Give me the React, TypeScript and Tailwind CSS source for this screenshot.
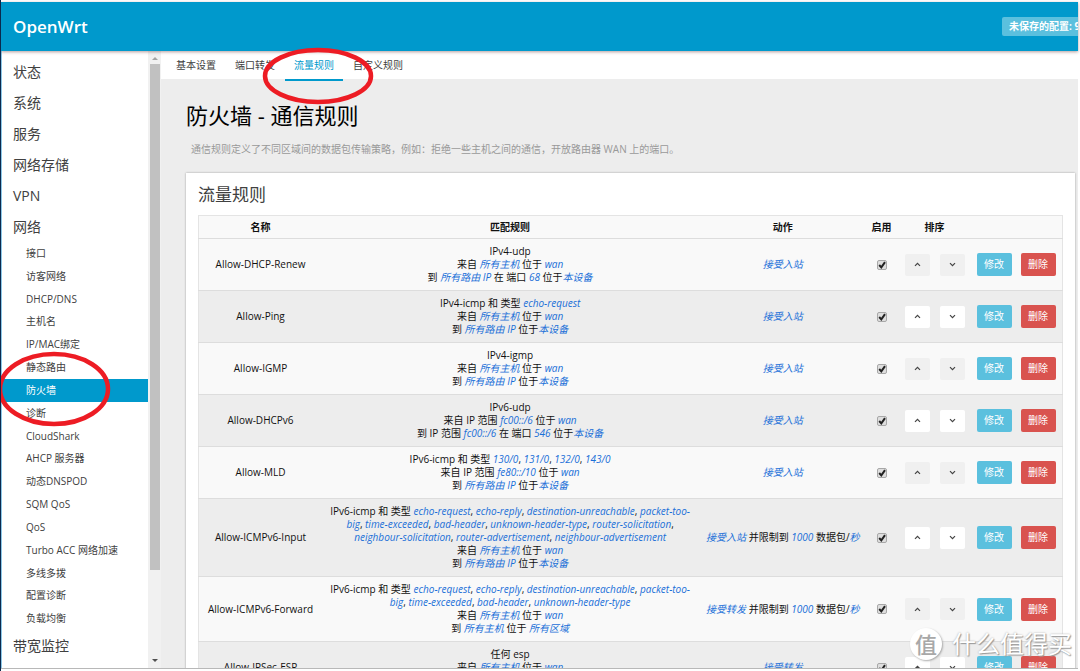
import { Fragment, type ReactNode } from "react";
import clsx from "clsx";

type Rule = {
  name: string;
  match: ReactNode[];
  action: ReactNode;
};

const Em = ({ children }: { children: ReactNode }) => (
  <em className="text-[#1a6fd8]">{children}</em>
);

// Comma separated list of ICMP types
const Types = ({ items }: { items: string[] }) => (
  <>
    {items.map((item, i) => (
      <Fragment key={item}>
        {i > 0 && ", "}
        <Em>{item}</Em>
      </Fragment>
    ))}
  </>
);

const fromAnyHost = (
  <>
    来自 <Em>所有主机</Em> 位于 <Em>wan</Em>
  </>
);

const toAnyRouterIp = (
  <>
    到 <Em>所有路由 IP</Em> 位于<Em>本设备</Em>
  </>
);

const toAnyZone = (
  <>
    到 <Em>所有主机</Em> 位于 <Em>所有区域</Em>
  </>
);

const rules: Rule[] = [
  {
    name: "Allow-DHCP-Renew",
    match: [
      "IPv4-udp",
      fromAnyHost,
      <>
        到 <Em>所有路由 IP</Em> 在 端口 <Em>68</Em> 位于<Em>本设备</Em>
      </>,
    ],
    action: <Em>接受入站</Em>,
  },
  {
    name: "Allow-Ping",
    match: [
      <>
        IPv4-icmp 和 类型 <Em>echo-request</Em>
      </>,
      fromAnyHost,
      toAnyRouterIp,
    ],
    action: <Em>接受入站</Em>,
  },
  {
    name: "Allow-IGMP",
    match: ["IPv4-igmp", fromAnyHost, toAnyRouterIp],
    action: <Em>接受入站</Em>,
  },
  {
    name: "Allow-DHCPv6",
    match: [
      "IPv6-udp",
      <>
        来自 IP 范围 <Em>fc00::/6</Em> 位于 <Em>wan</Em>
      </>,
      <>
        到 IP 范围 <Em>fc00::/6</Em> 在 端口 <Em>546</Em> 位于<Em>本设备</Em>
      </>,
    ],
    action: <Em>接受入站</Em>,
  },
  {
    name: "Allow-MLD",
    match: [
      <>
        IPv6-icmp 和 类型 <Types items={["130/0", "131/0", "132/0", "143/0"]} />
      </>,
      <>
        来自 IP 范围 <Em>fe80::/10</Em> 位于 <Em>wan</Em>
      </>,
      toAnyRouterIp,
    ],
    action: <Em>接受入站</Em>,
  },
  {
    name: "Allow-ICMPv6-Input",
    match: [
      <>
        IPv6-icmp 和 类型{" "}
        <Types
          items={[
            "echo-request",
            "echo-reply",
            "destination-unreachable",
            "packet-too-big",
            "time-exceeded",
            "bad-header",
            "unknown-header-type",
            "router-solicitation",
            "neighbour-solicitation",
            "router-advertisement",
            "neighbour-advertisement",
          ]}
        />
      </>,
      fromAnyHost,
      toAnyRouterIp,
    ],
    action: (
      <>
        <Em>接受入站</Em> 并限制到 <Em>1000</Em> 数据包/<Em>秒</Em>
      </>
    ),
  },
  {
    name: "Allow-ICMPv6-Forward",
    match: [
      <>
        IPv6-icmp 和 类型{" "}
        <Types
          items={[
            "echo-request",
            "echo-reply",
            "destination-unreachable",
            "packet-too-big",
            "time-exceeded",
            "bad-header",
            "unknown-header-type",
          ]}
        />
      </>,
      fromAnyHost,
      toAnyZone,
    ],
    action: (
      <>
        <Em>接受转发</Em> 并限制到 <Em>1000</Em> 数据包/<Em>秒</Em>
      </>
    ),
  },
  {
    name: "Allow-IPSec-ESP",
    match: ["任何 esp", fromAnyHost, toAnyZone],
    action: <Em>接受转发</Em>,
  },
];

const topMenu = ["状态", "系统", "服务", "网络存储", "VPN", "网络"];

const networkMenu = [
  "接口",
  "访客网络",
  "DHCP/DNS",
  "主机名",
  "IP/MAC绑定",
  "静态路由",
  "防火墙",
  "诊断",
  "CloudShark",
  "AHCP 服务器",
  "动态DNSPOD",
  "SQM QoS",
  "QoS",
  "Turbo ACC 网络加速",
  "多线多拨",
  "配置诊断",
  "负载均衡",
];

const tabs = ["基本设置", "端口转发", "流量规则", "自定义规则"];

const MenuLink = ({ label }: { label: string }) => (
  <a href="#" className="flex h-[31px] items-center pl-[11px] text-sm text-[#404040]">
    {label}
  </a>
);

const Sidebar = () => (
  <nav className="w-[146px] shrink-0 overflow-hidden bg-white pt-[5px]">
    {topMenu.map((label) => (
      <MenuLink key={label} label={label} />
    ))}
    <ul className="flex h-[388px] flex-col">
      {networkMenu.map((label) => (
        <li key={label} className="flex-1">
          <a
            href="#"
            className={clsx(
              "flex h-full items-center pl-6 text-[10px] whitespace-nowrap",
              label === "防火墙" ? "bg-[#0099cc] text-white" : "text-[#404040]"
            )}
          >
            {label}
          </a>
        </li>
      ))}
    </ul>
    <MenuLink label="带宽监控" />
  </nav>
);

const Scrollbar = () => (
  <div className="flex w-[13px] shrink-0 flex-col items-center bg-[#f1f1f1]">
    <div className="flex h-[13px] items-center">
      <svg width="6" height="4" viewBox="0 0 6 4">
        <path d="M0 4L3 1L6 4Z" fill="#a3a3a3" />
      </svg>
    </div>
    <div className="w-[10px] grow-[506] bg-[#c1c1c1]" />
    <div className="grow-[84]" />
    <div className="flex h-[14px] items-center">
      <svg width="6" height="4" viewBox="0 0 6 4">
        <path d="M0 0L3 3L6 0Z" fill="#505050" />
      </svg>
    </div>
  </div>
);

const SortButton = ({ dir, odd }: { dir: "up" | "down"; odd: boolean }) => (
  <button
    aria-label={dir === "up" ? "上移" : "下移"}
    className={clsx(
      "flex h-[22px] w-[25px] items-center justify-center rounded-[2px]",
      odd ? "bg-[#f0f0f0]" : "bg-white"
    )}
  >
    <svg width="7" height="5" viewBox="0 0 7 5" fill="none" stroke="#444" strokeWidth="1.2">
      <path d={dir === "up" ? "M1 3.8L3.5 1.3L6 3.8" : "M1 1.2L3.5 3.7L6 1.2"} />
    </svg>
  </button>
);

const RuleRow = ({ rule, odd }: { rule: Rule; odd: boolean }) => (
  <tr className={clsx("border-b border-[#ddd]", odd ? "bg-[#f9f9f9]" : "bg-[#ededed]")}>
    <td className="whitespace-nowrap">{rule.name}</td>
    <td className="px-1 py-[6px] leading-[13px]">
      {rule.match.map((line, i) => (
        <div key={i}>{line}</div>
      ))}
    </td>
    <td className="whitespace-nowrap">{rule.action}</td>
    <td>
      <label className="relative mx-auto block size-[10px]">
        <input
          type="checkbox"
          defaultChecked
          aria-label={`启用 ${rule.name}`}
          className="peer block size-[10px] appearance-none rounded-[2px] border border-[#a8a8a8] bg-[#dedede]"
        />
        <svg
          viewBox="0 0 10 10"
          className="pointer-events-none absolute inset-0 hidden size-[10px] peer-checked:block"
        >
          <path d="M2.2 5L4.3 7.3L8 2.2" fill="none" stroke="#222" strokeWidth="2" />
        </svg>
      </label>
    </td>
    <td>
      <div className="flex justify-center gap-[10px]">
        <SortButton dir="up" odd={odd} />
        <SortButton dir="down" odd={odd} />
      </div>
    </td>
    <td>
      <div className="flex gap-[9px] pl-[3px]">
        <button className="h-[23px] w-[35px] rounded-[2px] bg-[#5bc0de] text-white">
          修改
        </button>
        <button className="h-[23px] w-[35px] rounded-[2px] bg-[#d9534f] text-white">
          删除
        </button>
      </div>
    </td>
  </tr>
);

const RulesTable = () => (
  <table className="w-full table-fixed border border-[#e4e4e4] text-center text-[10px] text-[#111]">
    <colgroup>
      <col className="w-[14.3%]" />
      <col />
      <col className="w-[19.6%]" />
      <col className="w-[28px]" />
      <col className="w-[78px]" />
      <col className="w-[89px]" />
    </colgroup>
    <thead>
      <tr className="h-[23px] border-b border-[#ddd] bg-[#f9f9f9]">
        <th>名称</th>
        <th>匹配规则</th>
        <th>动作</th>
        <th className="whitespace-nowrap">启用</th>
        <th>排序</th>
        <th />
      </tr>
    </thead>
    <tbody>
      {rules.map((rule, i) => (
        <RuleRow key={rule.name} rule={rule} odd={i % 2 === 0} />
      ))}
    </tbody>
  </table>
);

const Watermark = () => (
  <div className="pointer-events-none absolute right-2 bottom-[11px] flex items-center gap-[10px]">
    <span className="flex size-8 items-center justify-center rounded-full bg-white text-[22px] font-medium text-[#a8a8a8] shadow-[1px_1px_2px_#aaa]">
      值
    </span>
    <span className="text-2xl leading-8 text-white [text-shadow:1px_1px_1px_#999,0_0_2px_#aaa]">
      什么值得买
    </span>
  </div>
);

const App = () => {
  return (
    <div className="relative flex h-screen flex-col overflow-hidden border-l border-[#0b2a4e] bg-white pt-[2px] pr-[2px] font-['Open_Sans','Noto_Sans_CJK_SC',sans-serif]">
      <header className="z-10 flex h-[49px] shrink-0 items-center justify-between overflow-hidden bg-[#0099cc] pl-3 text-white shadow-[0_1px_3px_rgba(90,40,40,0.45)]">
        <a href="#" className="text-[17px] font-semibold">
          OpenWrt
        </a>
        <div className="w-[76px] overflow-hidden">
          <a
            href="#"
            className="flex h-[19px] w-max items-center rounded-[2px] bg-[#5bc0de] px-[7px] text-[10px] font-bold whitespace-nowrap"
          >
            未保存的配置: 9
          </a>
        </div>
      </header>

      <div className="flex min-h-0 flex-1 border-l border-[#8cc8e8]">
        <Sidebar />
        <Scrollbar />
        <main className="min-w-0 flex-1 overflow-hidden bg-[#ededed]">
          {/* Tabs */}
          <div className="flex h-7 gap-px bg-white pl-[6px]">
            {tabs.map((tab) => (
              <a
                key={tab}
                href="#"
                className={clsx(
                  "flex h-[30px] items-center border-b-2 px-[9px] text-[10px]",
                  tab === "流量规则"
                    ? "border-[#0099cc] text-[#0099cc]"
                    : "border-transparent text-[#404040]"
                )}
              >
                {tab}
              </a>
            ))}
          </div>

          <div className="pt-5 pr-[3px] pl-[25px]">
            <h2 className="text-[22px] leading-8 text-black">防火墙 - 通信规则</h2>
            <p className="mt-[10px] pl-[5px] text-[10px] leading-4 text-[#999]">
              通信规则定义了不同区域间的数据包传输策略，例如：拒绝一些主机之间的通信，开放路由器 WAN 上的端口。
            </p>
            <section className="mt-4 bg-white px-3 pt-[10px] shadow-[0_0_2px_rgba(0,0,0,0.35)]">
              <h3 className="mb-[8px] text-[17px] leading-6 text-[#404040]">流量规则</h3>
              <RulesTable />
            </section>
          </div>
        </main>
      </div>
      <footer className="h-[3px] shrink-0 border-t border-[#b8b8b8]" />

      {/* Hand-drawn highlights */}
      <svg
        className="pointer-events-none absolute top-0 left-[-1px] z-20 h-[440px] w-[400px]"
        viewBox="0 0 400 440"
        fill="none"
        stroke="#ed1c24"
        strokeWidth="4.5"
      >
        <ellipse cx="318" cy="76" rx="53" ry="26" />
        <ellipse cx="54" cy="389" rx="54" ry="35" />
      </svg>
      <Watermark />
    </div>
  );
};

export default App;
